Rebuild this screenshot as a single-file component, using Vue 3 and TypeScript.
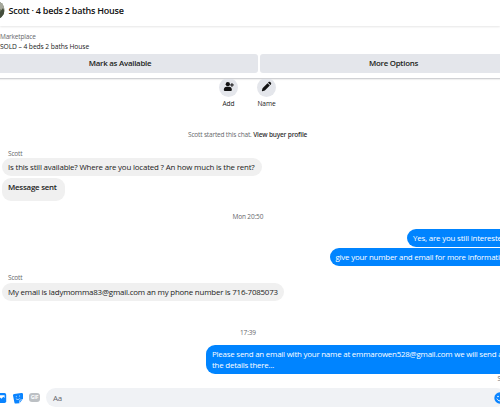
<script setup lang="ts">
interface Message {
  text: string
  kind: string
}

const firstMessages: Message[] = [
  { text: 'Is this still available? Where are you located ? An how much is the rent?', kind: 'question' },
  { text: 'Message sent', kind: 'status' },
]
const replies: Message[] = [
  { text: 'Yes, are you still interested?', kind: 'interest' },
  { text: 'give your number and email for more information', kind: 'request' },
]
</script>

<template>
  <div class="chat">
    <header class="header">
      <svg class="avatar" viewBox="0 0 8 20">
        <defs>
          <clipPath id="avatar-clip"><circle cx="-5" cy="10" r="9.5" /></clipPath>
        </defs>
        <g clip-path="url(#avatar-clip)">
          <rect width="8" height="20" fill="#6f7b62" />
          <path d="M0 0h5v8l-2 3-3-2z" fill="#a5a79b" />
          <path d="M0 12l3-4 2 4-2 6H0z" fill="#454e3c" />
        </g>
      </svg>
      <h1 class="title">Scott · 4 beds 2 baths House</h1>
    </header>

    <section class="listing">
      <p class="market">Marketplace</p>
      <p class="sold">SOLD – 4 beds 2 baths House</p>
      <div class="buttons">
        <button class="button available">Mark as Available</button>
        <button class="button options">More Options</button>
      </div>
    </section>

    <main class="thread">
      <div class="actions">
        <div class="action">
          <span class="disc">
            <svg viewBox="0 0 20 20">
              <circle cx="8.8" cy="5.8" r="3.9" />
              <path d="M1.500 16c0-3.500 2.300-5.500 5-5.500h4.600c2.700 0 5 2 5 5.500 0 1.200-.5 2-1.500 2H3c-1 0-1.500-.8-1.500-2z" />
              <path d="M16.300 4.500v5.500M13.600 7.200H19" stroke="#111" stroke-width="1.800" stroke-linecap="round" />
            </svg>
          </span>
          <span class="label">Add</span>
        </div>
        <div class="action">
          <span class="disc">
            <svg viewBox="0 0 20 20">
              <path d="M2.800 13l9-9 4.200 4.200-9 9-4.700 1.300c-.5.100-.8-.2-.7-.7zM12.800 3l1-1c.8-.8 2.100-.8 2.900 0l1.300 1.300c.8.800.8 2.100 0 2.900l-1 1z" />
            </svg>
          </span>
          <span class="label name">Name</span>
        </div>
      </div>

      <p class="notice"><span class="started">Scott started this chat.</span> <b>View buyer profile</b></p>

      <p class="sender">Scott</p>
      <div class="group incoming">
        <div v-for="m in firstMessages" :key="m.kind" class="bubble" :class="m.kind"><span>{{ m.text }}</span></div>
      </div>

      <time class="time monday">Mon 20:50</time>
      <div class="group outgoing">
        <div v-for="m in replies" :key="m.kind" class="bubble" :class="m.kind"><span>{{ m.text }}</span></div>
      </div>

      <p class="sender second">Scott</p>
      <div class="group incoming">
        <div class="bubble contact"><span>My email is ladymomma83@gmail.com an my phone number is 716-7085073</span></div>
      </div>

      <time class="time afternoon">17:39</time>
      <div class="group outgoing last">
        <div class="bubble details">
          <span>Please send an email with your name at emmarowen528@gmail.com we will send all</span>
          <span class="second-line">the details there...</span>
        </div>
      </div>
      <p class="sent">Sent</p>
    </main>

    <footer class="composer">
      <svg class="photo" viewBox="0 0 7 12">
        <path d="M0 1h4.500Q6.200 1 6.200 2.700v6.600Q6.200 11 4.500 11H0z" fill="#0a84ff" />
        <path d="M0 3.200h4.600v2.700L3.300 4.700 1.500 6.800 0 5.500z" fill="#fff" />
      </svg>
      <svg class="sticker" viewBox="0 0 12 12">
        <path d="M2.300 1.900l7-1c.9-.1 1.700.4 1.700 1.200v4.900L7.400 11.200l-3.200.4c-1 .1-1.600-.3-1.800-1.200L1 3.500c-.2-.9.4-1.500 1.300-1.600z" fill="#0a84ff" />
        <path d="M4.200 7c1.200 1 2.700.8 3.500-.4M4.300 4.300v.5M7.600 3.800v.5M7.500 10.700l.4-2.500 2.700-.6" fill="none" stroke="#fff" stroke-width=".6" stroke-linecap="round" />
      </svg>
      <span class="gif">GIF</span>
      <div class="field">
        <span>Aa</span>
        <svg class="emoji" viewBox="0 0 12 12">
          <circle cx="6" cy="6" r="5.700" fill="#0a84ff" />
          <circle cx="4" cy="4.500" r=".8" fill="#fff" />
          <circle cx="8" cy="4.500" r=".8" fill="#fff" />
          <path d="M3 7c1 2.600 5 2.600 6 0" fill="none" stroke="#fff" stroke-linecap="round" />
        </svg>
      </div>
    </footer>
  </div>
</template>

<style>
body {
  margin: 0;
  overflow: hidden;
  background: #fff;
}
</style>

<style scoped>
.chat {
  display: flex;
  flex-direction: column;
  width: 500px;
  height: 411px;
  overflow: hidden;
  font-family: "Open Sans", "Noto Sans", sans-serif;
  font-size: 7.900px;
  letter-spacing: -.175px;
  color: #222;
  white-space: nowrap;
}
p, h1 { margin: 0; }
.header {
  display: flex;
  flex: none;
  height: 26px;
  box-shadow: 0 1px 2px rgba(0, 0, 0, .1);
}
.avatar {
  flex: none;
  width: 8px;
  height: 20px;
}
.title {
  padding-left: .5px;
  font-size: 9px;
  font-weight: 600;
  letter-spacing: -.23px;
  line-height: 22px;
  color: #111;
}
.listing {
  flex: none;
  height: 52px;
  border-bottom: 1px solid #d0d1d4;
  box-shadow: 0 1px 1px rgba(0, 0, 0, .06);
}
.market {
  padding-top: 6px;
  font-size: 6.500px;
  letter-spacing: -.17px;
  line-height: 9px;
  color: #65676b;
}
.sold {
  font-size: 6.700px;
  letter-spacing: -.08px;
  line-height: 11px;
}
.buttons {
  display: flex;
  gap: 2px;
  width: 528px;
  margin: 2px 0 0 -5px;
}
.button {
  width: 264px;
  height: 18.500px;
  padding: 0;
  border: 0;
  border-radius: 3px;
  background: #e4e6eb;
  font: 600 7.900px/18px "Open Sans", sans-serif;
  letter-spacing: -.25px;
  color: #1c1e21;
}
.available { padding-right: 13px; }
.options { padding-left: 4px; }
.thread {
  flex: none;
  display: flex;
  flex-direction: column;
  height: 309px;
  overflow: hidden;
}
.actions {
  display: flex;
  justify-content: center;
  gap: 18px;
  height: 31px;
  padding-right: 5px;
  margin-top: -1.500px;
}
.action {
  display: flex;
  flex-direction: column;
  align-items: center;
  width: 20px;
}
.disc {
  display: flex;
  flex: none;
  align-items: center;
  justify-content: center;
  width: 19px;
  height: 19px;
  border-radius: 50%;
  background: #e4e6eb;
}
.disc svg {
  width: 11px;
  height: 11px;
  margin-top: -1px;
  fill: #111;
}
.label {
  margin-top: 2.500px;
  font-size: 6.600px;
  letter-spacing: -.08px;
  line-height: 10px;
}
.notice {
  align-self: flex-start;
  margin: 21px 0 0 188px;
  font-size: 6.500px;
  letter-spacing: -.17px;
  line-height: 9px;
  color: #65676b;
}
.notice b {
  font-weight: 600;
  color: #333;
}
.sender {
  margin: 10px 0 0 8px;
  font-size: 6.500px;
  letter-spacing: -.17px;
  line-height: 9px;
  color: #65676b;
}
.group {
  display: flex;
  flex-direction: column;
}
.incoming {
  align-items: flex-start;
  gap: 2px;
  padding-left: 2px;
}
.bubble {
  box-sizing: border-box;
  height: 18px;
  padding: 0 6px;
  border-radius: 9px;
  line-height: 18px;
}
.incoming .bubble { background: #f0f0f0; }
.question { width: 260px; }
.status {
  width: 63px;
  height: 23px;
  font-weight: 600;
  letter-spacing: -.24px;
}
.contact {
  width: 282px;
  letter-spacing: -.19px;
}
.time {
  font-size: 6.500px;
  letter-spacing: -.14px;
  line-height: 9px;
  color: #65676b;
}
.monday { margin: 11px 0 0 232.500px; }
.afternoon { margin: 27px 0 0 240px; }
.outgoing {
  align-items: flex-end;
  gap: 1px;
  margin-top: 8px;
}
.outgoing .bubble {
  overflow: hidden;
  background: #0084ff;
  color: #fff;
  border-radius: 9px 0 0 9px;
}
.bubble.interest { width: 93px; }
.bubble.request {
  width: 170.500px;
  letter-spacing: -.21px;
}
.second { margin-top: 7px; }
.second + .incoming { margin-top: 1px; }
.last { margin-top: 8.500px; }
.bubble.details {
  display: flex;
  flex-direction: column;
  width: 294px;
  height: 29px;
  padding-top: 4px;
  letter-spacing: -.21px;
  line-height: 10.500px;
}
.sent {
  margin: 0 0 0 497.500px;
  font-size: 6.500px;
  line-height: 9px;
  color: #65676b;
}
.composer {
  display: flex;
  align-items: center;
  height: 19px;
}
.photo {
  width: 7px;
  height: 12px;
}
.sticker {
  width: 12px;
  height: 12px;
  margin-left: 5px;
}
.gif {
  width: 11px;
  height: 9px;
  margin-left: 5px;
  border-radius: 3px;
  background: #bcc0c4;
  font-size: 5px;
  font-weight: 700;
  line-height: 9px;
  text-align: center;
  color: #fff;
}
.field {
  display: flex;
  flex: 1;
  align-items: center;
  justify-content: space-between;
  height: 19px;
  margin: 0 -6px 0 6px;
  padding-left: 7px;
  border-radius: 10px;
  background: #f0f2f5;
  color: #65676b;
}
.emoji {
  flex: none;
  width: 12px;
  height: 12px;
}
</style>
